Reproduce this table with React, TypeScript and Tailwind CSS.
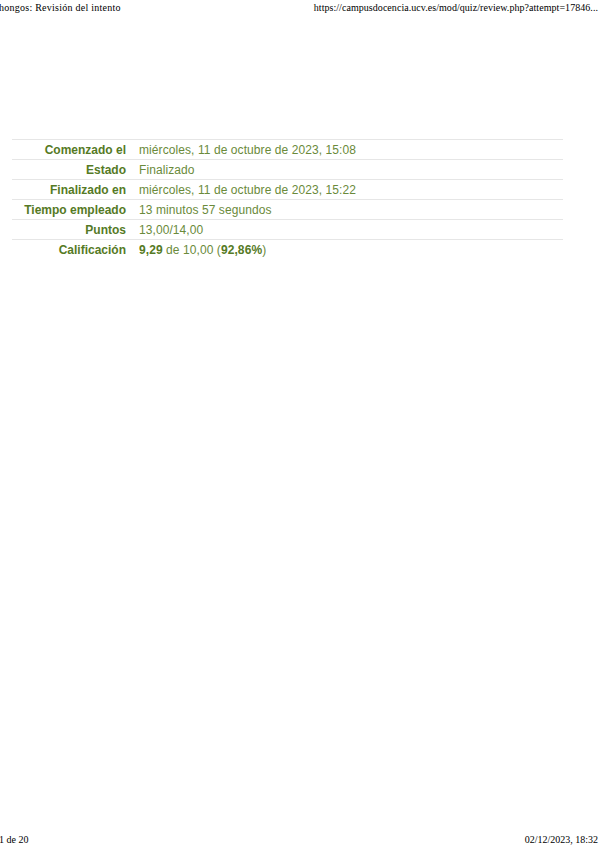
import React from "react";

const rows: { label: string; value: React.ReactNode }[] = [
  { label: "Comenzado el", value: "miércoles, 11 de octubre de 2023, 15:08" },
  { label: "Estado", value: "Finalizado" },
  { label: "Finalizado en", value: "miércoles, 11 de octubre de 2023, 15:22" },
  { label: "Tiempo empleado", value: "13 minutos 57 segundos" },
  { label: "Puntos", value: "13,00/14,00" },
  {
    label: "Calificación",
    value: (
      <>
        <b>9,29</b> de 10,00 (<b>92,86%</b>)
      </>
    ),
  },
];

export default function App() {
  return (
    <div className="relative w-[599px] h-[848px] bg-white overflow-hidden">
      <div
        className="flex justify-between items-start h-[14px] pt-[2px] text-[10px] leading-[12px] text-black tracking-[0.05px]"
        style={{ fontFamily: '"Liberation Serif", serif' }}
      >
        <span className="-ml-[1px] tracking-[0.25px]">hongos: Revisión del intento</span>
        <span className="pr-[1px]">https://campusdocencia.ucv.es/mod/quiz/review.php?attempt=17846...</span>
      </div>
      <div className="h-[125px]" />
      <table
        className="ml-[12px] w-[551px] border-collapse text-[12px]"
        style={{ fontFamily: '"Liberation Sans", Arial, sans-serif' }}
      >
        <tbody>
          {rows.map((r) => (
            <tr key={r.label} className="border-t border-[#e6e6e6] h-[20px]">
              <th className="w-[118px] text-right font-bold text-[#557a25] pr-[4px] pl-0 pt-[2px] pb-0 leading-[17px] whitespace-nowrap">
                {r.label}
              </th>
              <td className="text-left text-[#6a8a3a] pl-[9px] pt-[2px] pb-0 leading-[17px] tracking-[0.08px] [&_b]:text-[#557a25]">
                {r.value}
              </td>
            </tr>
          ))}
        </tbody>
      </table>
      <div
        className="absolute left-0 right-0 bottom-0 flex justify-between h-[14px] text-[10px] leading-[12px] text-black"
        style={{ fontFamily: '"Liberation Serif", serif' }}
      >
        <span className="-ml-[1px]">1 de 20</span>
        <span className="pr-[1px]">02/12/2023, 18:32</span>
      </div>
    </div>
  );
}
